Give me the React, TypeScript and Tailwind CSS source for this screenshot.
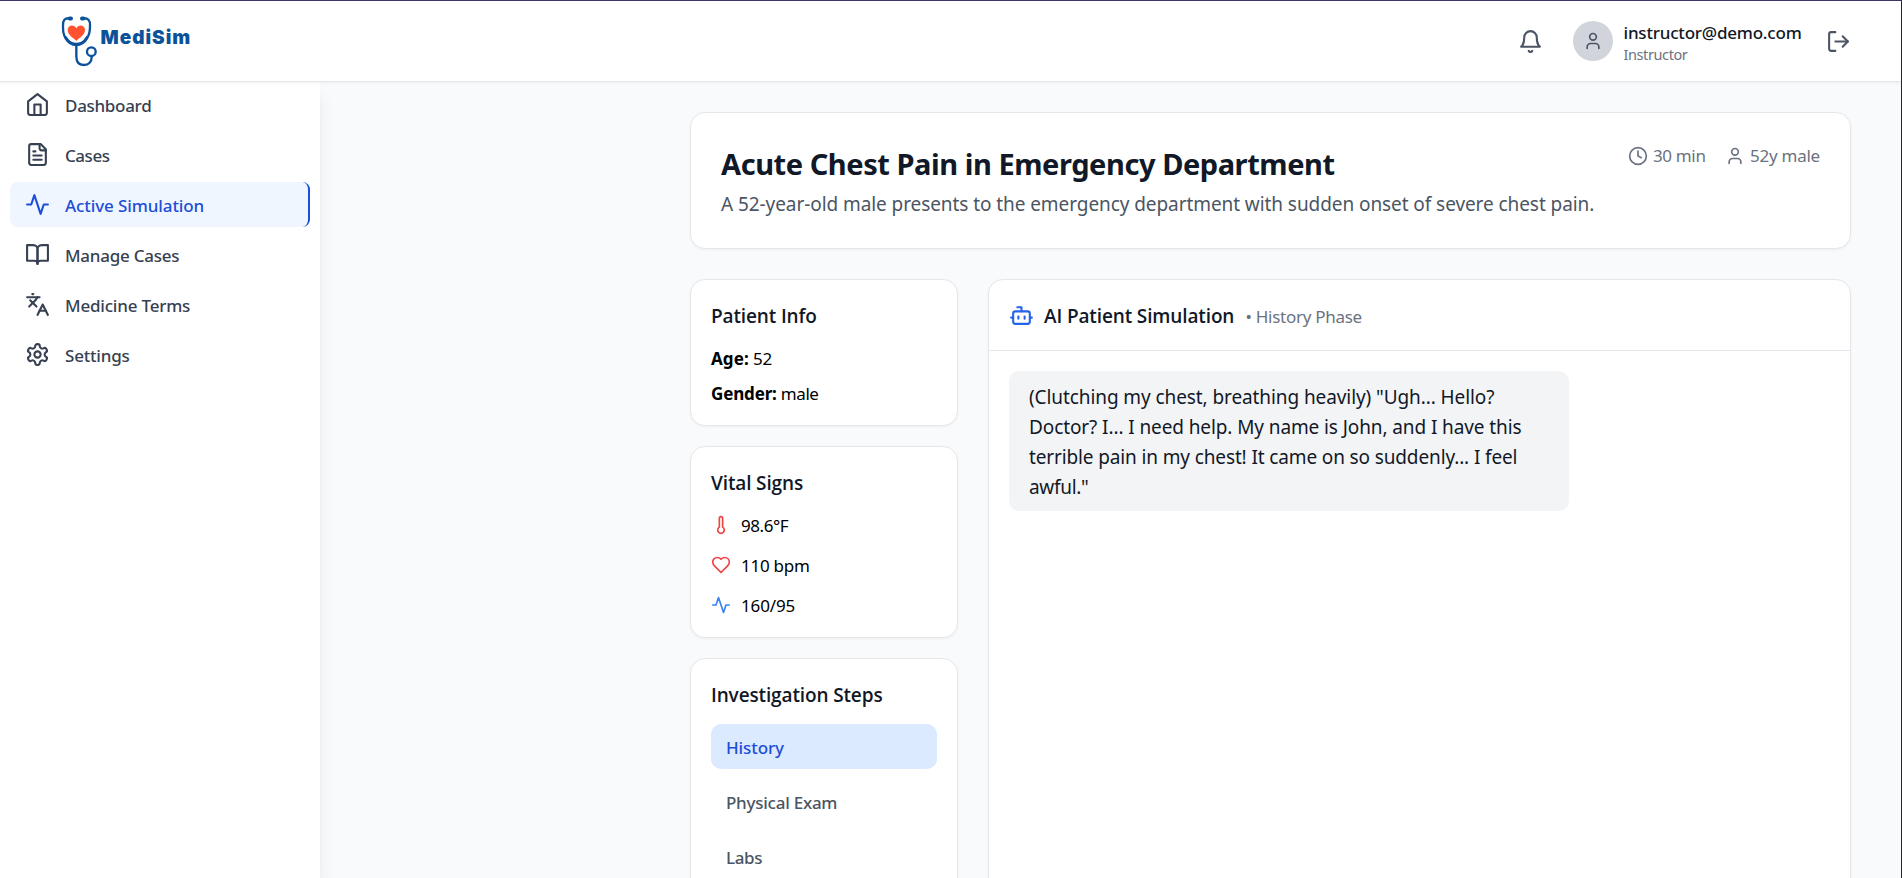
import type { ReactNode } from "react";

function Icon({ className, children, strokeWidth = 2 }: { className: string; children: ReactNode; strokeWidth?: number }) {
  return (
    <svg viewBox="0 0 24 24" fill="none" stroke="currentColor" strokeWidth={strokeWidth} strokeLinecap="round" strokeLinejoin="round" className={`shrink-0 ${className}`}>
      {children}
    </svg>
  );
}

const home = (
  <>
    <path d="m3 9 9-7 9 7v11a2 2 0 0 1-2 2H5a2 2 0 0 1-2-2z" />
    <path d="M9 22V12h6v10" />
  </>
);
const fileText = (
  <>
    <path d="M15 2H6a2 2 0 0 0-2 2v16a2 2 0 0 0 2 2h12a2 2 0 0 0 2-2V7Z" />
    <path d="M14 2v4a2 2 0 0 0 2 2h4" />
    <path d="M10 9H8" />
    <path d="M16 13H8" />
    <path d="M16 17H8" />
  </>
);
const activity = <path d="M22 12h-4l-3 9L9 3l-3 9H2" />;
const bookOpen = (
  <>
    <path d="M2 3h6a4 4 0 0 1 4 4v14a3 3 0 0 0-3-3H2z" />
    <path d="M22 3h-6a4 4 0 0 0-4 4v14a3 3 0 0 1 3-3h7z" />
  </>
);
const languages = (
  <>
    <path d="m5 8 6 6" />
    <path d="m4 14 6-6 2-3" />
    <path d="M2 5h12" />
    <path d="M7 2h1" />
    <path d="m22 22-5-10-5 10" />
    <path d="M14 18h6" />
  </>
);
const settings = (
  <>
    <path d="M12.22 2h-.44a2 2 0 0 0-2 2v.18a2 2 0 0 1-1 1.73l-.43.25a2 2 0 0 1-2 0l-.15-.08a2 2 0 0 0-2.73.73l-.22.38a2 2 0 0 0 .73 2.73l.15.1a2 2 0 0 1 1 1.72v.51a2 2 0 0 1-1 1.74l-.15.09a2 2 0 0 0-.73 2.73l.22.38a2 2 0 0 0 2.73.73l.15-.08a2 2 0 0 1 2 0l.43.25a2 2 0 0 1 1 1.73V20a2 2 0 0 0 2 2h.44a2 2 0 0 0 2-2v-.18a2 2 0 0 1 1-1.73l.43-.25a2 2 0 0 1 2 0l.15.08a2 2 0 0 0 2.73-.73l.22-.39a2 2 0 0 0-.73-2.73l-.15-.08a2 2 0 0 1-1-1.74v-.5a2 2 0 0 1 1-1.74l.15-.09a2 2 0 0 0 .73-2.73l-.22-.38a2 2 0 0 0-2.73-.73l-.15.08a2 2 0 0 1-2 0l-.43-.25a2 2 0 0 1-1-1.73V4a2 2 0 0 0-2-2z" />
    <circle cx="12" cy="12" r="3" />
  </>
);
const user = (
  <>
    <path d="M19 21v-2a4 4 0 0 0-4-4H9a4 4 0 0 0-4 4v2" />
    <circle cx="12" cy="7" r="4" />
  </>
);
const bell = (
  <>
    <path d="M6 8a6 6 0 0 1 12 0c0 7 3 9 3 9H3s3-2 3-9" />
    <path d="M10.3 21a1.94 1.94 0 0 0 3.4 0" />
  </>
);
const logOut = (
  <>
    <path d="M9 21H5a2 2 0 0 1-2-2V5a2 2 0 0 1 2-2h4" />
    <path d="m16 17 5-5-5-5" />
    <path d="M21 12H9" />
  </>
);
const clock = (
  <>
    <circle cx="12" cy="12" r="10" />
    <path d="M12 6v6l4 2" />
  </>
);
const thermometer = <path d="M14 4v10.54a4 4 0 1 1-4 0V4a2 2 0 0 1 4 0Z" />;
const heart = (
  <path d="M19 14c1.49-1.46 3-3.21 3-5.5A5.5 5.5 0 0 0 16.5 3c-1.76 0-3 .5-4.5 2-1.5-1.5-2.74-2-4.5-2A5.5 5.5 0 0 0 2 8.5c0 2.3 1.5 4.05 3 5.5l7 7Z" />
);
const bot = (
  <>
    <path d="M12 8V4H8" />
    <rect width="16" height="12" x="4" y="8" rx="2" />
    <path d="M2 14h2" />
    <path d="M20 14h2" />
    <path d="M15 13v2" />
    <path d="M9 13v2" />
  </>
);

function Logo() {
  return (
    <div className="flex items-start">
      <svg viewBox="60 41 120 162" className="h-[54px] w-[40px] shrink-0" fill="none" stroke="#0b529a" strokeLinecap="round">
        <path d="M90 54C74 52 68 60 69 76C69 88 68 96 73 106C80 120 92 131 109 131C126 131 138 120 145 106C150 96 150 88 150 76C151 60 144 52 128 54" strokeWidth="7" />
        <path d="M77 112C85 126 96 133 109 133C122 133 133 126 141 112" strokeWidth="9" />
        <path d="M89 54.500h4M126 54.500h4" strokeWidth="12" />
        <path d="M109 134V168C109 186 118 194 131 194C147 194 155 184 155 170" strokeWidth="7" />
        <circle cx="154" cy="154" r="13" strokeWidth="7" />
        <path d="M109 121C100 113 83 104 83 89C83 74 102 71 109 84C116 71 135 74 135 89C135 104 118 113 109 121Z" fill="#ff5230" stroke="none" />
      </svg>
      <span className="mt-[7.5px] ml-[0.5px] font-['Inter',sans-serif] text-[19px] leading-[32px] font-black tracking-[0.98px] text-[#0b529a]">MediSim</span>
    </div>
  );
}

const navItems = [
  { label: "Dashboard", icon: home, spacing: "tracking-[-0.3px]" },
  { label: "Cases", icon: fileText, spacing: "tracking-[-0.45px]" },
  { label: "Active Simulation", icon: activity, spacing: "tracking-[-0.1px]", active: true },
  { label: "Manage Cases", icon: bookOpen, spacing: "tracking-[-0.25px]" },
  { label: "Medicine Terms", icon: languages, spacing: "tracking-[-0.2px]" },
  { label: "Settings", icon: settings, spacing: "tracking-[-0.2px]" },
];

const vitals = [
  { value: "98.6°F", icon: thermometer, color: "text-[#ef4444]", spacing: "tracking-[-0.45px]" },
  { value: "110 bpm", icon: heart, color: "text-[#ef4444]", spacing: "tracking-[-0.25px]" },
  { value: "160/95", icon: activity, color: "text-[#3b82f6]", spacing: "tracking-[-0.15px]" },
];

const steps = [
  { label: "History", spacing: "tracking-[-0.1px]", active: true },
  { label: "Physical Exam", spacing: "tracking-[-0.25px]" },
  { label: "Labs", spacing: "tracking-[-0.4px]" },
];

const message = [
  { text: '(Clutching my chest, breathing heavily) "Ugh... Hello?', spacing: "tracking-[-0.09px]" },
  { text: "Doctor? I... I need help. My name is John, and I have this", spacing: "tracking-[-0.1px]" },
  { text: "terrible pain in my chest! It came on so suddenly... I feel", spacing: "tracking-[-0.13px]" },
  { text: 'awful."', spacing: "tracking-[-0.3px]" },
];

const card = "rounded-[15px] border border-[#e5e7eb] bg-white shadow-[0_1px_3px_rgba(0,0,0,0.05)]";

function Heading({ children }: { children: ReactNode }) {
  return <h3 className="h-[30px] font-['Open_Sans',sans-serif] text-[19px] leading-[32px] font-semibold tracking-[-0.13px] text-[#111827]">{children}</h3>;
}

export default function App() {
  return (
    <div className="flex h-[878px] w-[1902px] flex-col overflow-hidden border-t border-r border-t-[#3b3768] border-r-[#24262b] bg-[#f9fafb] font-['Noto_Sans','Open_Sans',sans-serif] text-black">
      <header className="relative z-20 flex h-[81px] shrink-0 items-center justify-between border-b border-[#e5e7eb] bg-white pr-[50px] pl-[60px] shadow-[0_1px_3px_rgba(0,0,0,0.05)]">
        <Logo />
        <div className="flex items-center">
          <Icon className="size-[25px] text-[#4b5563]">{bell}</Icon>
          <div className="ml-[30px] flex size-10 items-center justify-center rounded-full bg-[#d1d5db] text-[#4b5563]">
            <Icon className="size-5">{user}</Icon>
          </div>
          <div className="ml-[10px] w-[178px] pl-[0.5px] whitespace-nowrap">
            <p className="h-[25px] text-[17px] leading-[27px] font-medium tracking-[-0.2px] text-[#111827]">instructor@demo.com</p>
            <p className="h-5 text-[14.5px] leading-[21px] tracking-[-0.4px] text-[#6b7280]">Instructor</p>
          </div>
          <Icon className="ml-[25px] size-[25px] text-[#4b5563]">{logOut}</Icon>
        </div>
      </header>

      <div className="flex min-h-0 flex-1">
        <nav className="flex w-[320px] shrink-0 flex-col gap-[5px] bg-white px-[10px] shadow-[0_12px_19px_-4px_rgba(0,0,0,0.1),0_5px_8px_-5px_rgba(0,0,0,0.1)]">
          {navItems.map((item) => (
            <a
              key={item.label}
              className={`flex h-[45px] shrink-0 items-center gap-[15px] rounded-[7.5px] pl-[15px] ${item.active ? "border-r-2 border-[#1d4ed8] bg-[#eff6ff] text-[#1d4ed8]" : "text-[#374151]"}`}
            >
              <Icon className="size-[25px]">{item.icon}</Icon>
              <span className={`pt-[2px] text-[17px] leading-[25px] font-medium ${item.spacing}`}>{item.label}</span>
            </a>
          ))}
        </nav>

        <main className="flex min-w-0 flex-1 flex-col gap-[30px] pt-[30px] pr-[50px] pl-[370px]">
          <section className={`${card} flex h-[137px] shrink-0 justify-between p-[30px]`}>
            <div>
              <h1 className="h-10 text-[29px] leading-[41px] font-bold tracking-[-0.44px] whitespace-nowrap text-[#111827]">Acute Chest Pain in Emergency Department</h1>
              <p className="mt-[5px] text-[19px] leading-[32px] tracking-[-0.075px] whitespace-nowrap text-[#4b5563]">
                A 52-year-old male presents to the emergency department with sudden onset of severe chest pain.
              </p>
            </div>
            <div className="flex h-[25px] items-center text-[17px] leading-[27px] tracking-[-0.35px] whitespace-nowrap text-[#6b7280]">
              <Icon className="mr-[5px] size-5">{clock}</Icon>
              <span className="w-[52px]">30 min</span>
              <Icon className="mr-[5px] ml-5 size-5">{user}</Icon>
              <span className="w-[70px] tracking-[-0.25px]">52y male</span>
            </div>
          </section>

          <div className="flex min-h-0 flex-1 gap-[30px]">
            <div className="flex w-[268px] shrink-0 flex-col gap-5">
              <section className={`${card} h-[147px] shrink-0 p-5`}>
                <Heading>Patient Info</Heading>
                <div className="mt-[15px] flex flex-col gap-[10px] text-[17px] leading-[27px]">
                  <p className="h-[25px] tracking-[-0.3px]">
                    <strong className="tracking-[0.1px]">Age:</strong> 52
                  </p>
                  <p className="h-[25px] tracking-[-0.4px]">
                    <strong className="tracking-[-0.15px]">Gender:</strong> male
                  </p>
                </div>
              </section>

              <section className={`${card} h-[192px] shrink-0 p-5`}>
                <Heading>Vital Signs</Heading>
                <div className="mt-[15px] flex flex-col gap-[15px]">
                  {vitals.map((v) => (
                    <div key={v.value} className="flex h-[25px] items-center gap-[10px]">
                      <Icon className={`size-5 ${v.color}`}>{v.icon}</Icon>
                      <span className={`pt-[2px] text-[17px] leading-[25px] ${v.spacing}`}>{v.value}</span>
                    </div>
                  ))}
                </div>
              </section>

              <section className={`${card} h-[324px] shrink-0 p-5`}>
                <Heading>Investigation Steps</Heading>
                <div className="mt-[15px] flex flex-col gap-[10px]">
                  {steps.map((s) => (
                    <button
                      key={s.label}
                      className={`flex h-[45px] items-center rounded-[10px] px-[15px] pt-[2px] text-left text-[17px] leading-[25px] font-medium ${s.spacing} ${s.active ? "bg-[#dbeafe] text-[#1d4ed8]" : "text-[#4b5563]"}`}
                    >
                      {s.label}
                    </button>
                  ))}
                </div>
              </section>
            </div>

            <section className={`${card} h-[750px] min-w-0 flex-1`}>
              <div className="flex h-[71px] items-center border-b border-[#e5e7eb] px-5">
                <Icon className="mt-px size-[25px] text-[#2563eb]">{bot}</Icon>
                <div className="ml-[10px] flex items-baseline pt-[2px] leading-[30px] whitespace-nowrap">
                  <h2 className="w-[201.5px] font-['Open_Sans',sans-serif] text-[19px] font-semibold tracking-[-0.13px] text-[#111827]">AI Patient Simulation</h2>
                  <span className="text-[17px] tracking-[-0.28px] text-[#6b7280]">• History Phase</span>
                </div>
              </div>
              <div className="p-5">
                <div className="w-[560px] rounded-[10px] bg-[#f3f4f6] px-5 pt-[11px] pb-[9px] text-[19px] leading-[30px] whitespace-nowrap text-[#111827]">
                  {message.map((line) => (
                    <p key={line.text} className={line.spacing}>
                      {line.text}
                    </p>
                  ))}
                </div>
              </div>
            </section>
          </div>
        </main>
      </div>
    </div>
  );
}
